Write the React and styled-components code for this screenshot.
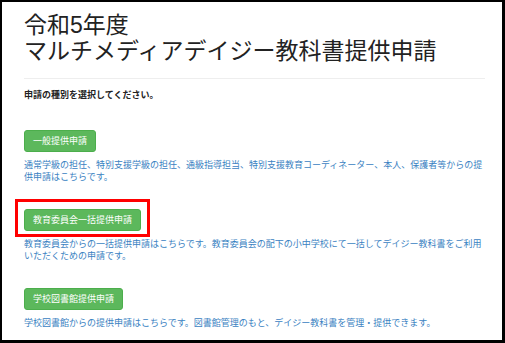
import styled, { createGlobalStyle } from 'styled-components';

const GlobalStyle = createGlobalStyle`
  html, body {
    margin: 0;
    padding: 0;
    background: #fff;
  }

  body {
    font-family: 'Liberation Sans', 'Noto Sans CJK JP', sans-serif;
    color: #333;
  }
`;

const Frame = styled.div`
  box-sizing: border-box;
  width: 505px;
  height: 343px;
  overflow: hidden;
  border-style: solid;
  border-color: #000;
  border-width: 2px 3px 3px 2px;
  padding: 10px 17px 0 22px;
`;

const Title = styled.h1`
  margin: 0;
  font-size: 23px;
  font-weight: 400;
  line-height: 26px;
  color: #222;
`;

const Rule = styled.hr`
  margin: 14px 0 0;
  border: 0;
  border-top: 1px solid #eee;
`;

const Lead = styled.p`
  margin: 10px 0 28px;
  font-size: 9px;
  font-weight: 700;
  line-height: 13px;
  color: #222;
`;

const Section = styled.section`
  margin-bottom: 26px;
`;

const Button = styled.button`
  display: inline-block;
  box-sizing: border-box;
  height: 22px;
  padding: 0 8px;
  font-family: inherit;
  font-size: 9px;
  line-height: 20px;
  color: #fff;
  background-color: #5cb85c;
  border: 1px solid #4cae4c;
  border-radius: 3px;
  cursor: pointer;
`;

const Highlight = styled.span`
  position: relative;
  display: inline-block;
  vertical-align: top;

  &::before {
    content: '';
    position: absolute;
    left: -9px;
    right: -9px;
    top: -10px;
    bottom: -6px;
    border: 3px solid #f00;
    pointer-events: none;
  }
`;

const ButtonRow = styled.div`
  height: 22px;
`;

const Note = styled.p`
  margin: 7px 0 0;
  font-size: 9px;
  line-height: 12px;
  color: #3a82c2;
`;

const requests = [
  {
    label: '一般提供申請',
    note: '通常学級の担任、特別支援学級の担任、通級指導担当、特別支援教育コーディネーター、本人、保護者等からの提供申請はこちらです。',
  },
  {
    label: '教育委員会一括提供申請',
    note: '教育委員会からの一括提供申請はこちらです。教育委員会の配下の小中学校にて一括してデイジー教科書をご利用いただくための申請です。',
    marked: true,
  },
  {
    label: '学校図書館提供申請',
    note: '学校図書館からの提供申請はこちらです。図書館管理のもと、デイジー教科書を管理・提供できます。',
  },
];

const App = () => {
  return (
    <>
      <GlobalStyle />
      <Frame>
        <Title>
          令和5年度
          <br />
          マルチメディアデイジー教科書提供申請
        </Title>
        <Rule />
        <Lead>申請の種別を選択してください。</Lead>
        {requests.map((item) => (
          <Section key={item.label}>
            <ButtonRow>
              {item.marked ? (
                <Highlight>
                  <Button type='button'>{item.label}</Button>
                </Highlight>
              ) : (
                <Button type='button'>{item.label}</Button>
              )}
            </ButtonRow>
            <Note>{item.note}</Note>
          </Section>
        ))}
      </Frame>
    </>
  );
};

export default App;
